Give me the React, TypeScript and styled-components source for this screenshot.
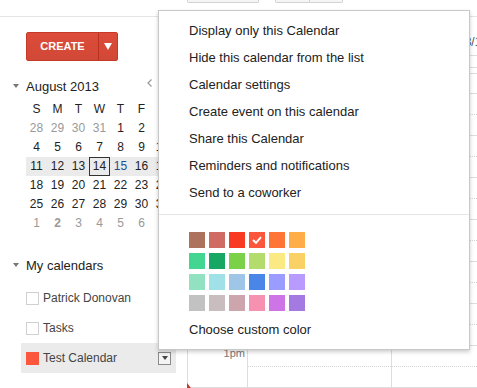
import React from "react";
import styled, { createGlobalStyle } from "styled-components";

const GlobalStyle = createGlobalStyle`
  html, body {
    margin: 0;
    padding: 0;
    background: #fff;
  }
  body {
    font-family: "Liberation Sans", Arial, sans-serif;
    color: #222;
  }
  * {
    box-sizing: border-box;
  }
`;

const Page = styled.div`
  position: relative;
  width: 477px;
  height: 388px;
  overflow: hidden;
  background: #fff;
`;

const TopBar = styled.div`
  display: flex;
  align-items: flex-start;
  gap: 16px;
  height: 17px;
  padding-left: 187px;
  border-bottom: 1px solid #e5e5e5;
`;

const ToolGroup = styled.div`
  display: flex;
`;

const ToolButton = styled.div<{ $w: number; $first?: boolean; $last?: boolean }>`
  width: ${(p) => p.$w}px;
  height: 3px;
  border: 1px solid #d3d3d3;
  border-top: none;
  border-left: ${(p) => (p.$first ? "1px solid #d3d3d3" : "none")};
  border-bottom-left-radius: ${(p) => (p.$first ? "2px" : "0")};
  border-bottom-right-radius: ${(p) => (p.$last ? "2px" : "0")};
  background: #f5f5f5;
`;

const Body = styled.div`
  display: flex;
  height: 371px;
`;

const Sidebar = styled.div`
  width: 187px;
  flex-shrink: 0;
  padding: 15px 0 0 13px;
`;

const CreateButton = styled.div`
  display: flex;
  width: 92px;
  height: 29px;
  margin-left: 13px;
  background: linear-gradient(#dd4b39, #d14836);
  border: 1px solid #c6392a;
  border-radius: 2px;
  color: #fff;
`;

const CreateLabel = styled.div`
  width: 71px;
  text-align: center;
  line-height: 27px;
  font-size: 11px;
  font-weight: bold;
`;

const CreateArrow = styled.div`
  flex: 1;
  display: flex;
  align-items: center;
  justify-content: center;
  border-left: 1px solid #b9301f;

  &::after {
    content: "";
    border-left: 4px solid transparent;
    border-right: 4px solid transparent;
    border-top: 7px solid #fff;
  }
`;

const SectionHead = styled.div<{ $top: number }>`
  display: flex;
  align-items: center;
  height: 18px;
  margin-top: ${(p) => p.$top}px;
  padding-right: 14px;
  font-size: 13px;
  color: #222;
`;

const Caret = styled.span`
  width: 0;
  height: 0;
  margin-right: 7px;
  border-left: 3px solid transparent;
  border-right: 3px solid transparent;
  border-top: 4px solid #777;
`;

const NavGroup = styled.div`
  display: flex;
  margin-left: auto;
  margin-bottom: 6px;
`;

const NavButton = styled.div`
  width: 16px;
  display: flex;
  justify-content: center;
`;

const MiniGrid = styled.div`
  margin: 5px 0 0 13px;
`;

const WeekRow = styled.div<{ $active?: boolean }>`
  display: flex;
  height: 19px;
  background: ${(p) => (p.$active ? "#ebebeb" : "transparent")};
`;

const DayCell = styled.div<{ $muted?: boolean; $today?: boolean; $bold?: boolean; $tint?: string }>`
  width: 21px;
  height: 19px;
  text-align: center;
  font-size: 12px;
  font-weight: ${(p) => (p.$bold ? "bold" : "normal")};
  color: ${(p) => p.$tint || (p.$muted ? "#999" : "#222")};
  border: ${(p) => (p.$today ? "1px solid #333" : "none")};
  line-height: ${(p) => (p.$today ? "17px" : "19px")};
`;

const CalList = styled.div`
  margin-top: 9px;
`;

const CalRow = styled.div<{ $active?: boolean }>`
  display: flex;
  align-items: center;
  width: 155px;
  height: 30px;
  margin-left: 8px;
  padding: 0 5px;
  background: ${(p) => (p.$active ? "#ebebeb" : "transparent")};
`;

const CalBox = styled.span<{ $color?: string }>`
  width: 13px;
  height: 13px;
  flex-shrink: 0;
  background: ${(p) => p.$color || "#fff"};
  border: ${(p) => (p.$color ? "none" : "1px solid #d0d0d0")};
`;

const CalName = styled.span`
  margin-left: 4px;
  font-size: 12px;
  color: #444;
`;

const RowMenuButton = styled.span`
  display: flex;
  align-items: center;
  justify-content: center;
  width: 13px;
  height: 13px;
  margin-left: auto;
  border: 1px solid #8a8a8a;
  background: #f4f4f4;

  &::after {
    content: "";
    border-left: 3.5px solid transparent;
    border-right: 3.5px solid transparent;
    border-top: 4px solid #444;
  }
`;

const Main = styled.div`
  flex: 1;
  min-width: 0;
`;

const HeadRow = styled.div<{ $h: number; $line?: boolean }>`
  display: grid;
  grid-template-columns: 60px 144px 144px;
  height: ${(p) => p.$h}px;
  border-bottom: ${(p) => (p.$line ? "1px solid #ddd" : "none")};
`;

const DayLabel = styled.div`
  padding-top: 18px;
  line-height: 14px;
  text-align: center;
  font-size: 12px;
  color: #555;
`;

const TimeGrid = styled.div`
  position: relative;
  border-left: 1px solid #ddd;
`;

const HourRow = styled.div`
  display: grid;
  grid-template-columns: 59px 144px 144px;
  height: 42px;
  border-top: 1px solid #ddd;
`;

const TimeCell = styled.div`
  padding-right: 2px;
  text-align: right;
  font-size: 11px;
  line-height: 14px;
  color: #777;
`;

const SlotCell = styled.div`
  border-left: 1px solid #ddd;
`;

const HalfLine = styled.div`
  margin-top: 20px;
  border-top: 1px dotted #d4d4d4;
`;

const NowMarker = styled.div`
  position: absolute;
  left: -1px;
  top: 290px;
  width: 0;
  height: 0;
  border-top: 5px solid transparent;
  border-left: 4px solid #c53929;
`;

const Menu = styled.div`
  position: absolute;
  left: 158px;
  top: 10px;
  width: 312px;
  height: 340px;
  padding-top: 6px;
  background: #fff;
  border: 1px solid #c8c8c8;
  box-shadow: 0 2px 4px rgba(0, 0, 0, 0.2);
`;

const MenuItem = styled.div<{ $gap?: number }>`
  height: 27px;
  margin-top: ${(p) => p.$gap || 0}px;
  padding-left: 30px;
  line-height: 27px;
  font-size: 13px;
  color: #222;
`;

const MenuDivider = styled.div`
  height: 1px;
  margin: 8px 0 17px;
  background: #e5e5e5;
`;

const SwatchGrid = styled.div`
  display: grid;
  grid-template-columns: repeat(6, 16px);
  grid-auto-rows: 16px;
  gap: 5px 4px;
  padding-left: 30px;
`;

const Swatch = styled.div<{ $color: string }>`
  display: flex;
  align-items: center;
  justify-content: center;
  background: ${(p) => p.$color};
`;

const menuItems = [
  "Display only this Calendar",
  "Hide this calendar from the list",
  "Calendar settings",
  "Create event on this calendar",
  "Share this Calendar",
  "Reminders and notifications",
  "Send to a coworker",
];

const palette = [
  "#ac725e", "#d06b64", "#f83a22", "#fa573c", "#ff7537", "#ffad46",
  "#42d692", "#16a765", "#7bd148", "#b3dc6c", "#fbe983", "#fad165",
  "#92e1c0", "#9fe1e7", "#9fc6e7", "#4986e7", "#9a9cff", "#b99aff",
  "#c2c2c2", "#cabdbf", "#cca6ac", "#f691b2", "#cd74e6", "#a47ae2",
];

type Day = { n: number; muted?: boolean };

const weeks: Day[][] = [
  [{ n: 28, muted: true }, { n: 29, muted: true }, { n: 30, muted: true }, { n: 31, muted: true }, { n: 1 }, { n: 2 }, { n: 3 }],
  [4, 5, 6, 7, 8, 9, 10].map((n) => ({ n })),
  [11, 12, 13, 14, 15, 16, 17].map((n) => ({ n })),
  [18, 19, 20, 21, 22, 23, 24].map((n) => ({ n })),
  [25, 26, 27, 28, 29, 30, 31].map((n) => ({ n })),
  [1, 2, 3, 4, 5, 6, 7].map((n) => ({ n, muted: true })),
];

// labels for the rows under the menu stay empty; only 1pm shows below it
const hours = ["", "", "", "", "", "", "1pm", ""];

const Chevron = ({ dir }: { dir: "left" | "right" }) => (
  <svg width="5" height="8" viewBox="0 0 5 8">
    <polyline
      points={dir === "left" ? "4.5,0.5 1,4 4.5,7.5" : "0.5,0.5 4,4 0.5,7.5"}
      fill="none"
      stroke="#999"
      strokeWidth="1.2"
    />
  </svg>
);

const Check = () => (
  <svg width="10" height="8" viewBox="0 0 10 8">
    <polyline points="1,4 4,6.8 9,1.2" fill="none" stroke="#fff" strokeWidth="2" />
  </svg>
);

export default function App() {
  return (
    <Page>
      <GlobalStyle />
      <TopBar>
        <ToolButton $w={72} $first $last />
        <ToolGroup>
          <ToolButton $w={35} $first />
          <ToolButton $w={33} $last />
        </ToolGroup>
      </TopBar>

      <Body>
        <Sidebar>
          <CreateButton>
            <CreateLabel>CREATE</CreateLabel>
            <CreateArrow />
          </CreateButton>

          <SectionHead $top={16}>
            <Caret />
            August 2013
            <NavGroup>
              <NavButton><Chevron dir="left" /></NavButton>
              <NavButton><Chevron dir="right" /></NavButton>
            </NavGroup>
          </SectionHead>

          <MiniGrid>
            <WeekRow>
              {["S", "M", "T", "W", "T", "F", "S"].map((d, i) => (
                <DayCell key={i}>{d}</DayCell>
              ))}
            </WeekRow>
            {weeks.map((week, wi) => (
              <WeekRow key={wi} $active={wi === 2}>
                {week.map((d, di) => (
                  <DayCell
                    key={di}
                    $muted={d.muted}
                    $today={wi === 2 && d.n === 14}
                    $bold={wi === 5 && d.n === 2}
                    $tint={wi === 2 && d.n === 15 ? "#1f4f8f" : undefined}
                  >
                    {d.n}
                  </DayCell>
                ))}
              </WeekRow>
            ))}
          </MiniGrid>

          <SectionHead $top={23}>
            <Caret />
            My calendars
          </SectionHead>

          <CalList>
            <CalRow>
              <CalBox />
              <CalName>Patrick Donovan</CalName>
            </CalRow>
            <CalRow>
              <CalBox />
              <CalName>Tasks</CalName>
            </CalRow>
            <CalRow $active>
              <CalBox $color="#fa573c" />
              <CalName>Test Calendar</CalName>
              <RowMenuButton />
            </CalRow>
          </CalList>
        </Sidebar>

        <Main>
          <HeadRow $h={39} $line>
            <div />
            <DayLabel>Sun 8/11</DayLabel>
            <DayLabel>Mon 8/12</DayLabel>
          </HeadRow>
          <HeadRow $h={12} $line />
          <HeadRow $h={6} $line />
          <HeadRow $h={19} />
          <TimeGrid>
            {hours.map((h, i) => (
              <HourRow key={i}>
                <TimeCell>{h}</TimeCell>
                <SlotCell><HalfLine /></SlotCell>
                <SlotCell><HalfLine /></SlotCell>
              </HourRow>
            ))}
            <NowMarker />
          </TimeGrid>
        </Main>
      </Body>

      <Menu>
        {menuItems.map((m) => (
          <MenuItem key={m}>{m}</MenuItem>
        ))}
        <MenuDivider />
        <SwatchGrid>
          {palette.map((c, i) => (
            <Swatch key={c} $color={c}>
              {i === 3 && <Check />}
            </Swatch>
          ))}
        </SwatchGrid>
        <MenuItem $gap={5}>Choose custom color</MenuItem>
      </Menu>
    </Page>
  );
}
